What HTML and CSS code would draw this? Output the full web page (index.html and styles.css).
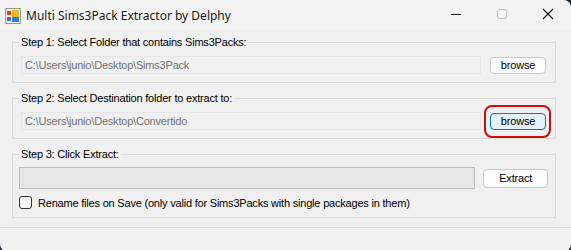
FILE: index.html
```html
<!DOCTYPE html>
<html lang="en">
<head>
  <meta charset="UTF-8">
  <title>Multi Sims3Pack Extractor by Delphy</title>
  <link rel="stylesheet" href="styles.css">
</head>
<body>
  <div class="window">
    <div class="titlebar">
      <svg class="app-icon" width="16" height="16" viewBox="0 0 16 16">
        <rect x="0.5" y="0.5" width="15" height="15" fill="#f4f4f4" stroke="#9a9a9a"/>
        <rect x="2" y="3" width="4" height="4" fill="#e2382b"/>
        <rect x="2" y="9" width="4" height="4" fill="#3a6fd8"/>
        <rect x="7" y="2" width="7" height="7" fill="#f2b51c"/>
        <rect x="7" y="9" width="7" height="5" fill="#2d7be0"/>
        <rect x="3" y="10" width="2" height="2" fill="#e2382b"/>
      </svg>
      <span class="title">Multi Sims3Pack Extractor by Delphy</span>
      <div class="controls">
        <svg width="46" height="30" viewBox="0 0 46 30"><path d="M18 14.5h10" stroke="#1a1a1a" stroke-width="1"/></svg>
        <svg width="46" height="30" viewBox="0 0 46 30"><rect x="18.5" y="9.5" width="9" height="9" rx="1.5" fill="none" stroke="#c4c4c4"/></svg>
        <svg width="46" height="30" viewBox="0 0 46 30"><path d="M18 9l10 10M28 9l-10 10" stroke="#1a1a1a" stroke-width="1.1"/></svg>
      </div>
    </div>

    <div class="content">
      <fieldset class="group">
        <legend>Step 1: Select Folder that contains Sims3Packs:</legend>
        <div class="row">
          <input class="path" type="text" value="C:\Users\junio\Desktop\Sims3Pack" disabled>
          <button class="btn">browse</button>
        </div>
      </fieldset>

      <fieldset class="group">
        <legend>Step 2: Select Destination folder to extract to:</legend>
        <div class="row">
          <input class="path" type="text" value="C:\Users\junio\Desktop\Convertido" disabled>
          <span class="marked"><button class="btn btn-focus">browse</button></span>
        </div>
      </fieldset>

      <fieldset class="group group-last">
        <legend>Step 3: Click Extract:</legend>
        <div class="row row-extract">
          <div class="progress"></div>
          <button class="btn btn-extract">Extract</button>
        </div>
        <label class="check">
          <span class="box"></span>
          Rename files on Save (only valid for Sims3Packs with single packages in them)
        </label>
      </fieldset>
    </div>

    <div class="footer-line"></div>
  </div>
</body>
</html>
```

FILE: styles.css
```css
html, body {
  margin: 0;
  height: 250px;
  overflow: hidden;
  background-color: #1d2733;
}
.window {
  height: 252px;
  background-color: #f0f0f0;
  border-radius: 0 8px 8px 8px;
  font-family: "Liberation Sans", Arial, sans-serif;
  font-size: 11px;
  letter-spacing: -0.2px;
  color: #000;
}
.titlebar {
  height: 30px;
  display: flex;
  align-items: center;
  background-color: #f3f3f3;
  border-radius: 0 8px 0 0;
  letter-spacing: 0;
}
.app-icon {
  margin-left: 5px;
  margin-top: 1px;
}
.title {
  margin-left: 5px;
  font-family: "Noto Sans", "Open Sans", sans-serif;
  font-size: 12px;
  color: #1a1a1a;
  flex: 1;
}
.controls {
  display: flex;
}
.controls svg {
  display: block;
}
.content {
  padding: 6px 15px 0 12px;
}
.group {
  margin: 0 0 9px 0;
  padding: 0 7px 8px 7px;
  border: 1px solid #dcdcdc;
  min-width: 0;
}
.group legend {
  padding: 0 2px;
  line-height: 13px;
  margin-left: -1px;
}
.row {
  display: flex;
  align-items: center;
  margin-top: 7px;
}
.path {
  width: 460px;
  height: 18px;
  box-sizing: border-box;
  margin: 0 0 0 1px;
  padding: 0 3px;
  border: 1px solid #e6e6e6;
  background-color: #f0f0f0;
  color: #707070;
  font-family: "Liberation Sans", Arial, sans-serif;
  font-size: 11px;
  letter-spacing: -0.2px;
}
.btn {
  width: 56px;
  height: 17px;
  margin-left: 9px;
  padding: 0;
  border: 1px solid #c8c8c8;
  border-radius: 4px;
  background-color: #fdfdfd;
  font-family: "Liberation Sans", Arial, sans-serif;
  font-size: 11px;
  letter-spacing: -0.2px;
  color: #000;
  line-height: 15px;
}
.marked {
  position: relative;
  display: flex;
}
.marked::after {
  content: "";
  position: absolute;
  left: 3px;
  top: -8px;
  width: 63px;
  height: 29px;
  border: 2px solid #d10a0a;
  border-radius: 8px;
}
.btn-focus {
  border-color: #0078d7;
  background-color: #e5f1fb;
}
.row-extract {
  margin-top: 6px;
}
.progress {
  width: 458px;
  height: 22px;
  box-sizing: border-box;
  margin-left: -1px;
  border: 1px solid #bcbcbc;
  background-color: #e6e6e6;
}
.btn-extract {
  width: 65px;
  height: 19px;
  margin-left: 8px;
  line-height: 17px;
}
.check {
  display: flex;
  align-items: center;
  margin-top: 7px;
  margin-left: -1px;
}
.box {
  width: 13px;
  height: 13px;
  box-sizing: border-box;
  border: 1px solid #333;
  border-radius: 3px;
  background-color: #f5f5f5;
  margin-right: 6px;
}
.footer-line {
  margin-top: 9px;
  height: 1px;
  background-color: #dadada;
}
```
